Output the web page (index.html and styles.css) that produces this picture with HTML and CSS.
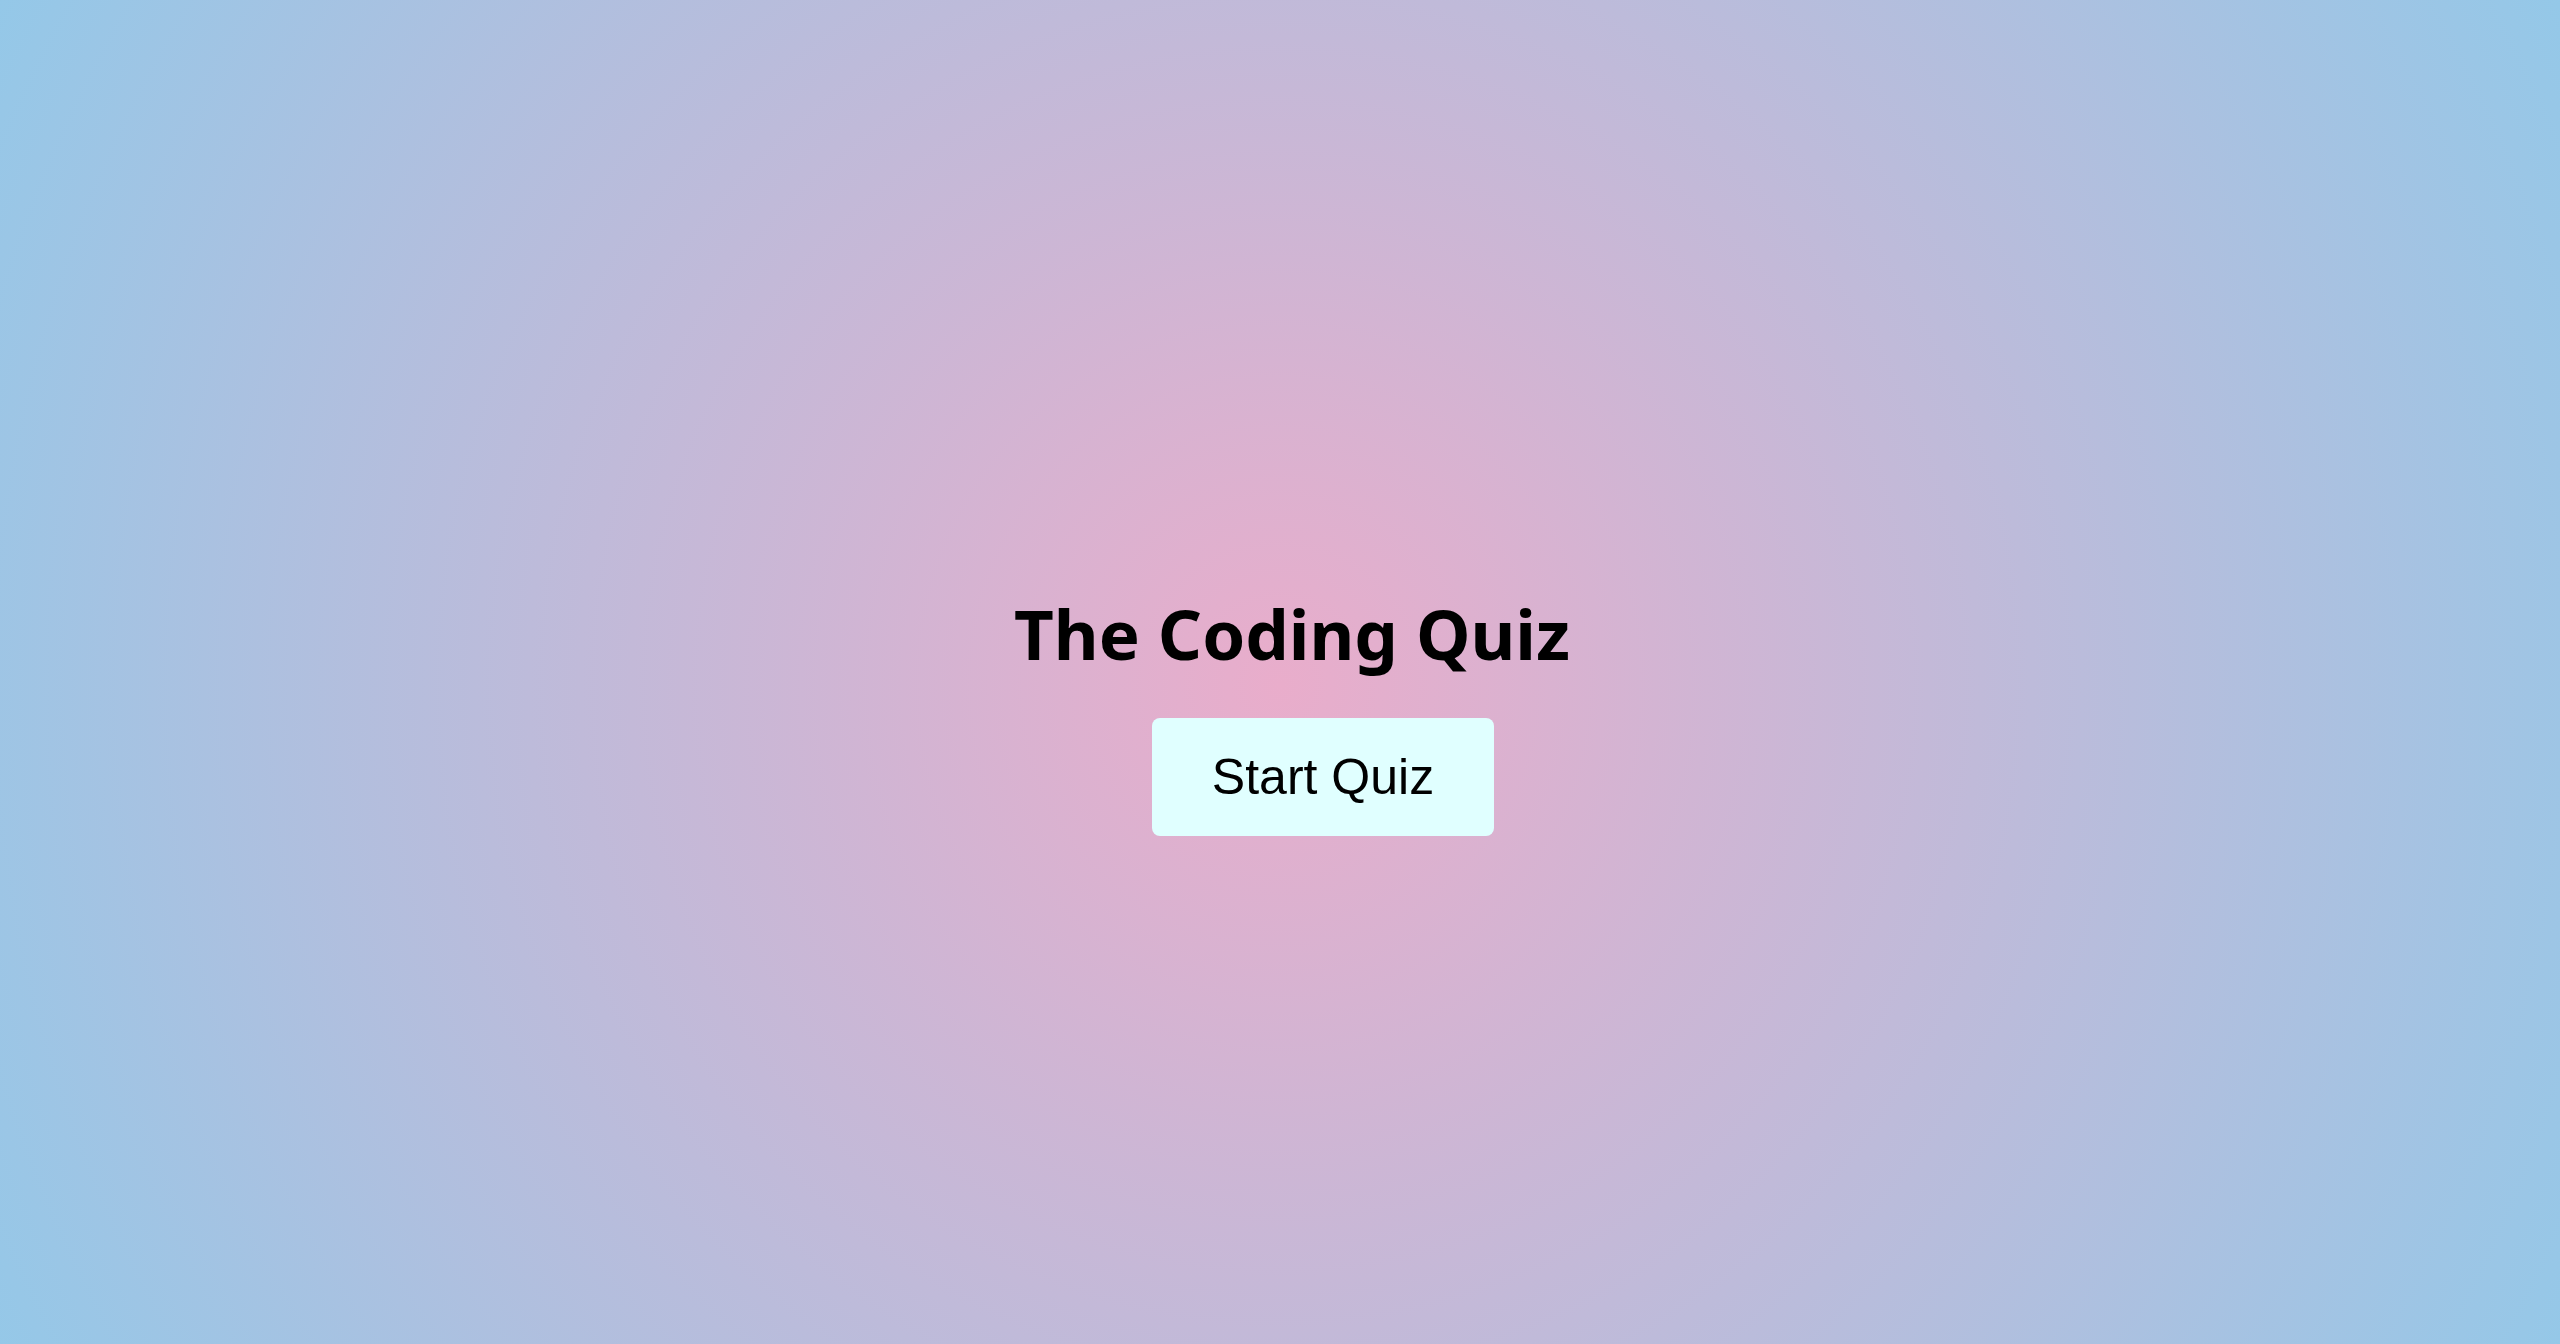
FILE: index.html
```html
<!DOCTYPE html>
<html lang="en">
<head>
<meta charset="utf-8">
<title>The Coding Quiz</title>
<link rel="stylesheet" href="styles.css">
</head>
<body>
<main class="start">
  <h1 class="title">The Coding Quiz</h1>
  <button class="start-btn" type="button">Start Quiz</button>
</main>
</body>
</html>
```

FILE: styles.css
```css
html, body {
  margin: 0;
  padding: 0;
  height: 100%;
}
body {
  background: radial-gradient(circle at 50% 51%, #e9adcb 0%, #94c8e8 100%);
  font-family: "Liberation Sans", Arial, sans-serif;
}
.start {
  box-sizing: border-box;
  height: 100vh;
  display: flex;
  flex-direction: column;
  align-items: center;
  justify-content: center;
  padding-top: 78px;
}
.title {
  margin: 0 0 38px 24px;
  font-family: "Noto Sans", sans-serif;
  font-weight: 700;
  font-size: 69px;
  color: #000;
}
.start-btn {
  margin-left: 86px;
  padding: 30px 60px;
  border: none;
  border-radius: 8px;
  background: #e0ffff;
  color: #000;
  font-family: "Liberation Sans", Arial, sans-serif;
  font-size: 50px;
  line-height: normal;
  cursor: pointer;
}
```
